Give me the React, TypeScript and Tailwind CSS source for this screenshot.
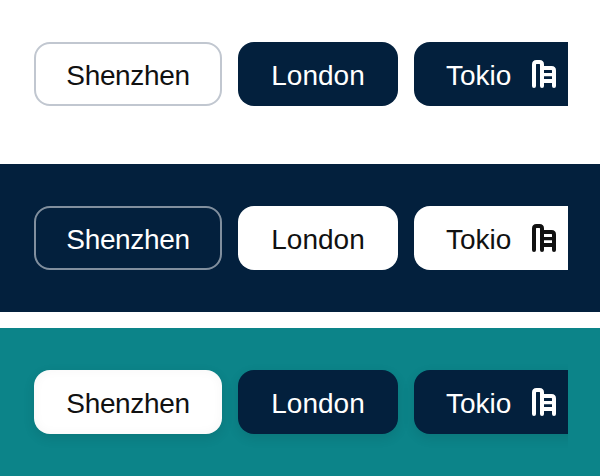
import React from "react";

function BuildingIcon() {
  return (
    <svg width="24" height="28" viewBox="0 0 24 28" fill="none" stroke="currentColor" strokeWidth="4" strokeLinecap="round" strokeLinejoin="round" className="shrink-0">
      <path d="M2 26V4.500Q2 2 4.500 2H7.500Q10 2 10 4.500V26" />
      <path d="M10 8H19.500Q22 8 22 10.500V26M11 21H21" />
      <path d="M11 14.600H21" strokeWidth="3.400" />
    </svg>
  );
}

type Theme = { band: string; first: string; rest: string };

const themes: Theme[] = [
  { band: "h-[164px] bg-white", first: "border-2 border-[#c1c7d0] bg-white text-[#111]", rest: "bg-[#03203d] text-white" },
  { band: "h-[148px] bg-[#03203d]", first: "border-2 border-[#818f9e] text-white", rest: "bg-white text-[#111]" },
  {
    band: "mt-4 h-[148px] bg-[#0c8489]",
    first: "bg-white text-[#111] shadow-[0_4px_12px_rgba(0,0,0,0.1),inset_0_0_12px_rgba(0,0,0,0.04)]",
    rest: "bg-[#03203d] text-white shadow-[0_4px_12px_rgba(0,0,0,0.1)]",
  },
];

const chip = "flex h-16 shrink-0 items-center rounded-2xl";

export default function App() {
  return (
    <main className="h-[476px] w-[600px] overflow-hidden bg-white font-['Liberation_Sans',Arial,sans-serif] text-[28px]">
      {themes.map((t) => (
        <section key={t.band} className={`${t.band} pt-[22px]`}>
          <div className="flex w-[568px] gap-4 overflow-hidden pt-5 pb-6 pl-[34px]">
            <button className={`${chip} w-[188px] justify-center ${t.first}`}>
              <span className="pt-[3px] tracking-[-0.35px]">Shenzhen</span>
            </button>
            <button className={`${chip} w-40 justify-center ${t.rest}`}>
              <span className="pt-[3px]">London</span>
            </button>
            <button className={`${chip} w-[180px] pl-8 ${t.rest}`}>
              <span className="w-[86px] pt-[3px] text-left">Tokio</span>
              <BuildingIcon />
            </button>
          </div>
        </section>
      ))}
    </main>
  );
}
